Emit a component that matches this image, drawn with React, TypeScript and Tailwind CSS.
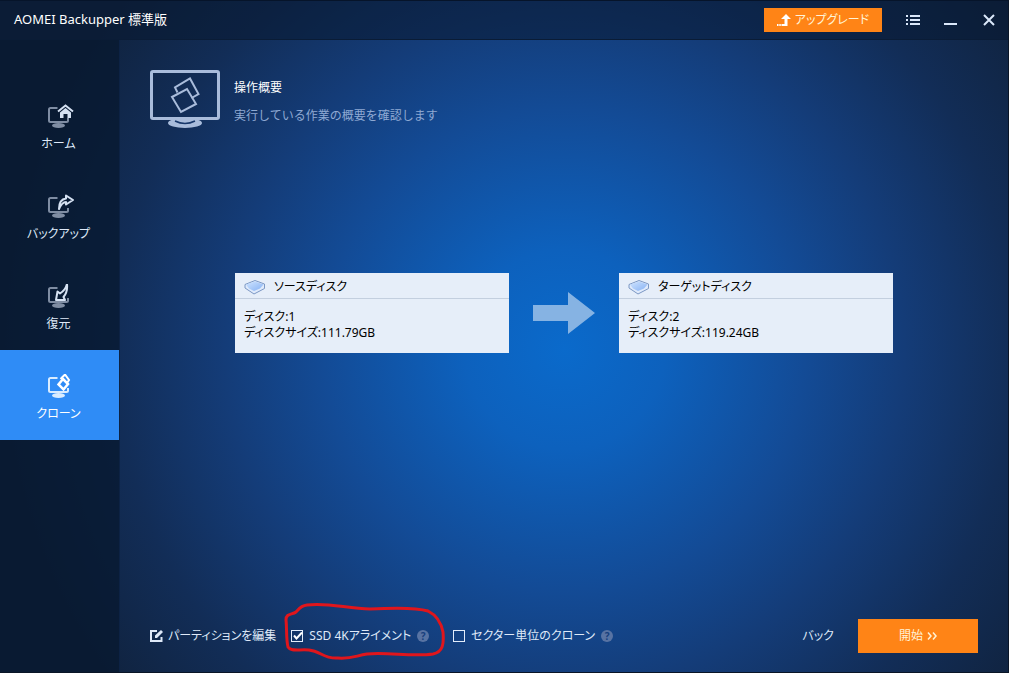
import { useState } from "react";
import type { ReactNode } from "react";

const NAV = [
  { id: "home", label: "ホーム" },
  { id: "backup", label: "バックアップ" },
  { id: "restore", label: "復元" },
  { id: "clone", label: "クローン" },
];

const GLYPHS: Record<string, ReactNode> = {
  home: (
    <>
      <path d="M11 7.5 18.5 1.5 26 7.5" fill="none" stroke="currentColor" strokeWidth="2" />
      <path d="M13 8.5 18.5 4 24 8.5V14h-3.5v-4h-4v4H13z" fill="currentColor" />
    </>
  ),
  backup: (
    <path
      d="M12 15C12 8 15 5 19 4.5V1.5L26 6 19 10.5V8C16 8 14 10.5 12 15z"
      fill="none"
      stroke="currentColor"
      strokeWidth="2"
      strokeLinejoin="round"
    />
  ),
  restore: (
    <path
      d="M20 0C20.5 5 20 9 16.500 13L18 16H9L10.500 7.500 13 9.500C17 7 19 4 20 0z"
      fill="none"
      stroke="currentColor"
      strokeWidth="2"
      strokeLinejoin="round"
    />
  ),
  clone: (
    <>
      <path d="M13.5 5 18 0.5 22 6 20 9" fill="none" stroke="currentColor" strokeWidth="2" />
      <path d="M16 5 21 10 16.5 15.5 11.5 10.5z" fill="none" stroke="currentColor" strokeWidth="2.5" />
    </>
  ),
};

function NavIcon({ id, active }: { id: string; active: boolean }) {
  return (
    <svg viewBox="0 0 28 24" className="ml-1 h-6 w-7" aria-hidden="true">
      <g className={active ? "text-[#d9ecff]" : "text-[#7f8da3]"}>
        <path
          d="M10.5 4H3.5Q2 4 2 5.5V16.5Q2 18 3.5 18H19.5Q21 18 21 16.5V14"
          fill="none"
          stroke="currentColor"
          strokeWidth="2"
        />
        <ellipse cx="11.5" cy="21.5" rx="6.5" ry="2.5" fill="currentColor" />
      </g>
      <g className={active ? "text-white" : "text-[#d5e1f2]"}>{GLYPHS[id]}</g>
    </svg>
  );
}

function MonitorIcon() {
  return (
    <svg viewBox="0 0 70 58" className="h-[58px] w-[70px] shrink-0 text-[#a9bcdb]" aria-hidden="true">
      <ellipse cx="35" cy="53" rx="17" ry="5" fill="currentColor" />
      <path d="M25 51Q35 56 45 51" fill="none" stroke="#17376a" strokeWidth="1.5" />
      <rect x="1.5" y="1.5" width="67" height="47" rx="1.5" fill="none" stroke="currentColor" strokeWidth="3" />
      <path d="M27.5 22.5 25 17.500 40 8.500 48.500 24 41.500 28" fill="none" stroke="currentColor" strokeWidth="2" />
      <path d="M22 27 37 19 46 34 31 42z" fill="none" stroke="currentColor" strokeWidth="2" />
    </svg>
  );
}

function DiskIcon() {
  return (
    <svg viewBox="0 0 22 16" className="h-4 w-[22px]" aria-hidden="true">
      <defs>
        <linearGradient id="disk" x1="0" y1="0" x2="1" y2="1">
          <stop offset="0" stopColor="#cfe4ff" />
          <stop offset="1" stopColor="#86b1f3" />
        </linearGradient>
      </defs>
      <path d="M1 5.5 11 1.5 20.5 5V9.5L10 15 1 9z" fill="#dfeafb" stroke="#7c98c4" strokeLinejoin="round" />
      <path d="M2 5.5 11 2.5 19.5 5.5 16 9.5 10 12 5 9.5z" fill="url(#disk)" />
    </svg>
  );
}

function DiskCard({ title, disk, size }: { title: string; disk: number; size: string }) {
  return (
    <section className="h-20 w-[274px] bg-[#e6eef9] text-black">
      <h2 className="flex h-[26px] items-center gap-2 border-b border-[#c3cfdf] px-[9px] pt-0.5">
        <DiskIcon />
        {title}
      </h2>
      <div className="px-[9px] pt-[10px] leading-4">
        <p>{`ディスク:${disk}`}</p>
        <p>{`ディスクサイズ:${size}`}</p>
      </div>
    </section>
  );
}

function HelpDot({ label }: { label: string }) {
  return (
    <button
      type="button"
      aria-label={label}
      className="flex size-3 items-center justify-center rounded-full bg-[#5873a3] text-[10px] leading-3 font-bold text-[#173f7d]"
    >
      ?
    </button>
  );
}

type CheckOptionProps = {
  id: string;
  label: string;
  checked: boolean;
  onChange: () => void;
};

function CheckOption({ id, label, checked, onChange }: CheckOptionProps) {
  return (
    <div className="flex items-center gap-1.5">
      <span className="relative size-3">
        <input
          id={id}
          type="checkbox"
          checked={checked}
          onChange={onChange}
          className="block size-3 appearance-none border border-[#e3edfb]"
        />
        {checked && (
          <svg viewBox="0 0 12 12" className="pointer-events-none absolute inset-0 size-3" aria-hidden="true">
            <path d="M3 5.5 5.5 8.5 11 2.5" fill="none" stroke="#ffffff" strokeWidth="2" />
          </svg>
        )}
      </span>
      <label htmlFor={id}>{label}</label>
    </div>
  );
}

export default function App() {
  const [active, setActive] = useState("clone");
  const [align, setAlign] = useState(true);
  const [sector, setSector] = useState(false);

  return (
    <div className="min-h-screen bg-white pr-[3px] font-['Noto_Sans','Noto_Sans_CJK_JP',sans-serif] text-xs text-[#dfe9f8] [font-feature-settings:'palt']">
      <div className="flex min-h-screen flex-col border-r border-b border-[#0a1526] bg-[radial-gradient(circle_at_56%_52%,#0a6acb_0px,#0d61bd_100px,#134b96_240px,#143c78_340px,#122d57_450px,#10233f_560px)]">
        <header className="flex h-10 items-center border-t border-b border-t-[#06142a] border-b-[#0a1c36] bg-[#07182f]/55 pr-3 pl-[14px]">
          <h1 className="text-[13px] text-white">AOMEI Backupper 標準版</h1>
          <button
            type="button"
            className="ml-auto flex h-6 w-[118px] items-center justify-center gap-1 bg-[#ff8416] text-[#fff3d6]"
          >
            <svg viewBox="0 0 14 12" className="h-3 w-[14px]" aria-hidden="true">
              <path d="M9 0 14 5H10.5V12H4.5V10H7.5V5H4zM0 10h1.5v2H0zM2.3 10h1.5v2H2.3z" fill="#ffffff" />
            </svg>
            アップグレード
          </button>
          <button type="button" aria-label="メニュー" className="ml-6">
            <svg viewBox="0 0 14 12" className="h-3 w-[14px]" aria-hidden="true">
              <path d="M0 1h2v2H0zM4 1h10v2H4zM0 5h2v2H0zM4 5h10v2H4zM0 9h2v2H0zM4 9h10v2H4z" fill="#dbe8fa" />
            </svg>
          </button>
          <button type="button" aria-label="最小化" className="ml-6">
            <svg viewBox="0 0 14 12" className="h-3 w-[14px]" aria-hidden="true">
              <path d="M0 9h13v2H0z" fill="#dbe8fa" />
            </svg>
          </button>
          <button type="button" aria-label="閉じる" className="ml-6">
            <svg viewBox="0 0 14 12" className="h-3 w-[14px]" aria-hidden="true">
              <path d="M2 1 12 11M12 1 2 11" stroke="#dbe8fa" strokeWidth="2" />
            </svg>
          </button>
        </header>

        <div className="flex flex-1">
          <nav className="w-[120px] shrink-0 border-r border-[#0c2244] bg-[#07182f]/75 pt-10">
            {NAV.map((item) => (
              <button
                key={item.id}
                type="button"
                onClick={() => setActive(item.id)}
                className={`flex h-[90px] w-full flex-col items-center gap-2 pt-6 pr-0.5 ${
                  active === item.id ? "bg-[#2f8cf6] text-white" : ""
                }`}
              >
                <NavIcon id={item.id} active={active === item.id} />
                {item.label}
              </button>
            ))}
          </nav>

          <main className="flex flex-1 flex-col px-[30px] pt-[30px] pb-[19px]">
            <div className="flex gap-[14px]">
              <MonitorIcon />
              <div className="pt-[10px]">
                <h2 className="text-white">操作概要</h2>
                <p className="mt-3 text-[#8fa9d3] [font-feature-settings:normal]">実行している作業の概要を確認します</p>
              </div>
            </div>

            <div className="mt-[145px] flex items-center justify-center gap-6">
              <DiskCard title="ソースディスク" disk={1} size="111.79GB" />
              <svg viewBox="0 0 62 42" className="h-[42px] w-[62px]" aria-hidden="true">
                <path d="M0 13H35V0L62 21 35 42V29H0z" fill="#86b3e3" />
              </svg>
              <DiskCard title="ターゲットディスク" disk={2} size="119.24GB" />
            </div>

            <footer className="mt-auto flex items-center">
              <button type="button" className="flex items-center gap-1">
                <svg viewBox="0 0 14 14" className="size-[14px]" aria-hidden="true">
                  <path d="M7 2H1V12H11.500V8" fill="none" stroke="currentColor" strokeWidth="2" />
                  <path d="M5 6.500 11 1 13 3 7 9H5z" fill="currentColor" />
                </svg>
                パーティションを編集
              </button>
              <div className="relative ml-[15px] flex items-center gap-1.5">
                <CheckOption id="align" label="SSD 4Kアライメント" checked={align} onChange={() => setAlign(!align)} />
                <HelpDot label="SSD 4Kアライメントのヘルプ" />
                {/* hand-drawn marker around the alignment option */}
                <svg
                  viewBox="0 0 164 60"
                  className="pointer-events-none absolute -top-[26px] -left-2 h-[60px] w-[164px]"
                  aria-hidden="true"
                >
                  <path
                    d="M3 18C3 11 9 13 13 10C16 7 17 4 24 3C45 0 65 7 87 7C105 6 132 5 145 9C153 13 158 20 160 30C161 42 160 50 150 52C130 55 105 50 84 52C72 54 68 57 55 56C40 57 38 49 26 48C16 47 8 50 5 45C3 37 4 27 3 18z"
                    fill="none"
                    stroke="#e0161c"
                    strokeWidth="3"
                    strokeLinejoin="round"
                  />
                </svg>
              </div>
              <div className="ml-6 flex items-center gap-1.5">
                <CheckOption id="sector" label="セクター単位のクローン" checked={sector} onChange={() => setSector(!sector)} />
                <HelpDot label="セクター単位のクローンのヘルプ" />
              </div>
              <button type="button" className="ml-auto">
                バック
              </button>
              <button
                type="button"
                className="ml-6 flex h-[34px] w-[120px] items-center justify-center gap-1 bg-[#ff8416] text-[#fff3d6]"
              >
                開始
                <svg viewBox="0 0 10 8" className="h-2 w-[10px]" aria-hidden="true">
                  <path d="M1 0.5 4 4 1 7.5M6 0.5 9 4 6 7.5" fill="none" stroke="currentColor" strokeWidth="1.5" />
                </svg>
              </button>
            </footer>
          </main>
        </div>
      </div>
    </div>
  );
}
